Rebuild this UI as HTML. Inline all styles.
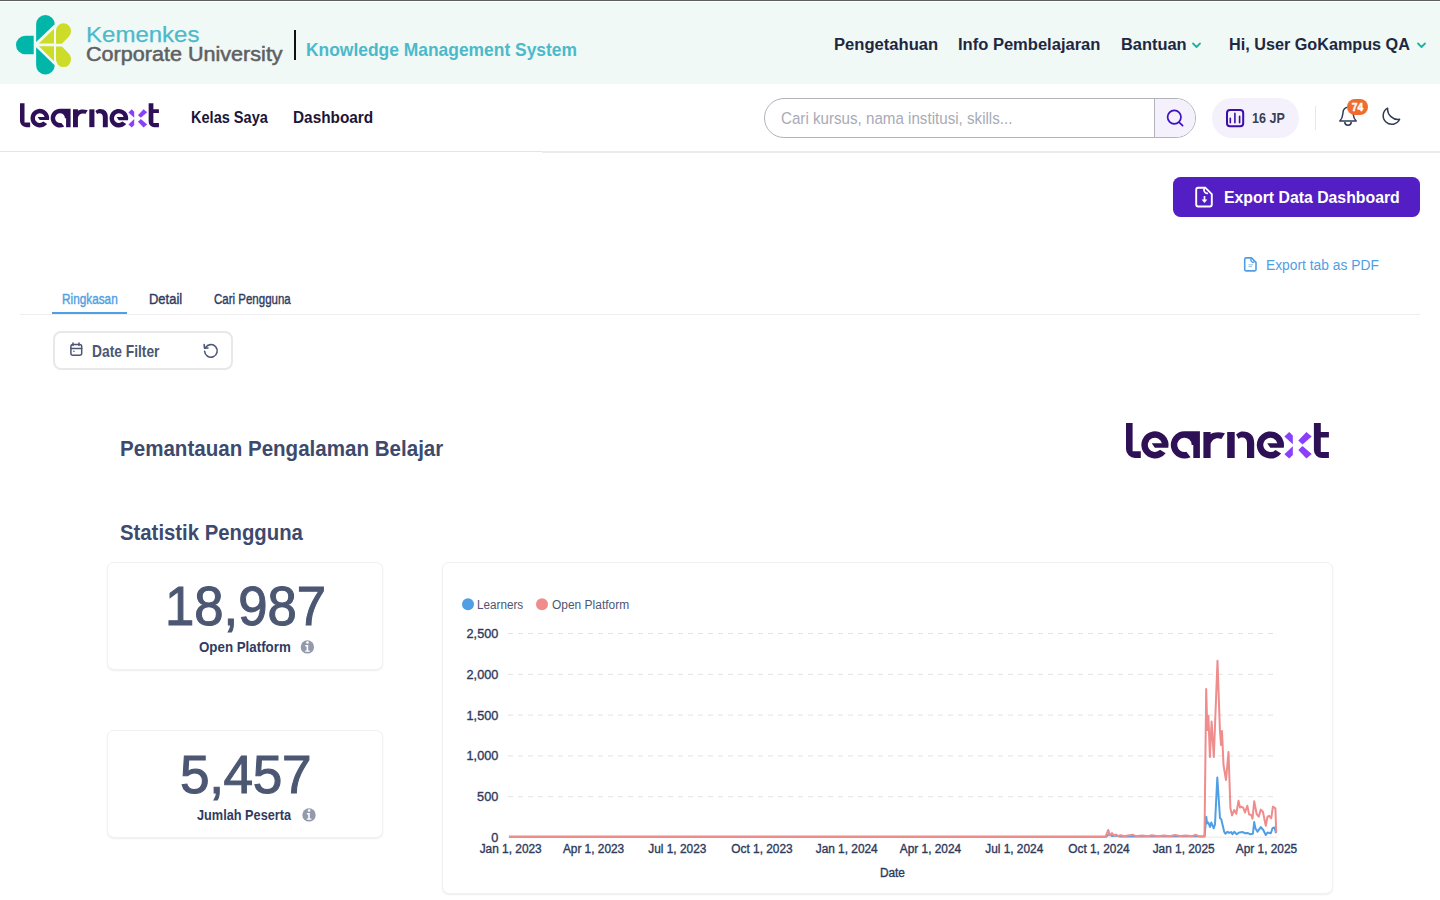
<!DOCTYPE html>
<html><head><meta charset="utf-8">
<style>
*{box-sizing:border-box;margin:0;padding:0}
html,body{width:1440px;height:900px;overflow:hidden;background:#fff;font-family:"Liberation Sans",sans-serif}
.a{position:absolute}
.t{position:absolute;white-space:nowrap;line-height:1;font-family:"Liberation Sans",sans-serif}
.card{position:absolute;background:#fff;border:1px solid #f1f1f3;border-radius:7px;box-shadow:0 1px 2px rgba(0,0,0,0.07)}
</style></head>
<body>
<div class="a" style="left:0;top:0;width:1440px;height:1px;background:#5d605e"></div>
<div class="a" style="left:0;top:2px;width:1440px;height:82px;background:#f0f9f6"></div>
<div class="a" style="left:0;top:151px;width:542px;height:1px;background:#e4e4e8"></div>
<div class="a" style="left:542px;top:151px;width:898px;height:2px;background:#ececef"></div>

<svg class="a" style="left:0;top:0" width="80" height="84">
<g fill="#00b6a8">
<path d="M33.7,35.7 H25.3 A9.3,9.3 0 0 0 25.3,54.3 H33.7 Z"/>
<path d="M36.1,41.9 V24.3 A9.3,9.3 0 0 1 54.7,24.3 Z"/>
<path d="M36.1,47.3 V65.2 A9.3,9.3 0 0 0 54.7,65.2 Z"/>
</g>
<g fill="#cddc28">
<path d="M56,43.8 V30.7 A7.5,7.5 0 0 1 71,30.7 C71,33.5 70,35.5 68,37.5 L61.9,43.8 Z"/>
<path d="M56,46.5 H61.9 L68,52.8 C70,54.8 71,56.8 71,59.6 A7.5,7.5 0 0 1 56,59.6 Z"/>
<path d="M38.9,43.4 L54,28.7 V43.4 Z"/>
<path d="M38.9,46.2 H54 V61.3 Z"/>
</g>
</svg>
<div class="a" style="left:294px;top:30px;width:2px;height:29.5px;background:#111"></div>

<svg class="a" style="left:1185px;top:36px" width="250" height="20">
<path d="M8,7.5 L11.5,11 L15,7.5" fill="none" stroke="#1fb39f" stroke-width="1.8" stroke-linecap="round" stroke-linejoin="round"/>
<path d="M233,7.5 L236.5,11 L240,7.5" fill="none" stroke="#1fb39f" stroke-width="1.8" stroke-linecap="round" stroke-linejoin="round"/>
</svg>

<svg class="a" style="left:20.2px;top:103.1px" width="139" height="25" viewBox="0 0 203 36">
<g fill="#2e1056">
<path d="M0,0 H6.6 V28.2 H14.8 V35 H9 A9,9 0 0 1 0,26 Z"/>
<path transform="translate(-115.45,-0.15)" d="M155.1,30.4 A13.6,13.6 0 1 1 157.7,24.8 H144.3 L141.2,20.3 H151.3 A7.1,7.1 0 1 0 149.5,26.9 Z"/>
<path d="M64.59,34.17 A13.7,13.7 0 1 1 58.5,8.2 H73.9 V35 H67.3 V21.9 H65.7 A7.2,7.2 0 1 0 60.36,28.85 Z"/>
<path d="M77.4,35 V9 H84.6 V11.2 C87.5,9.3 92,8.5 99,10.3 L95.4,15.9 C90,14 86,16.5 84.6,21 V35 Z"/>
<rect x="101.2" y="9" width="7.5" height="26"/>
<path d="M110.1,11.4 C113,9 115,8.5 117,8.5 C124,8.5 128.2,12.5 128.2,20 V35 H121 V20.5 C121,16.5 119,14.6 116,14.6 C114.5,14.6 113.5,15 112.6,15.9 Z"/>
<path d="M155.1,30.4 A13.6,13.6 0 1 1 157.7,24.8 H144.3 L141.2,20.3 H151.3 A7.1,7.1 0 1 0 149.5,26.9 Z"/>
<path d="M187.9,0 H194.8 V9 H202.9 V14.5 H194.8 V28.9 H202.9 V35 H196 A8.1,8.1 0 0 1 187.9,26.9 Z"/>
</g>
<g fill="#8a3ffc">
<path d="M158.4,13.6 L163.2,9 L166.8,12.5 V21.2 Z"/>
<path d="M158.4,31.2 L163.2,35.5 L166.8,32 V23.2 Z"/>
<path d="M172.3,17.6 L180.4,9 L185.7,13.4 L176.5,21.4 Z"/>
<path d="M172.3,27 L176.5,23 L185.7,31 L180.4,35.5 Z"/>
</g>
</svg>

<div class="a" style="left:764px;top:98px;width:432px;height:40px;border:1px solid #b3b3bd;border-radius:20px;background:#fff;overflow:hidden">
  <div class="a" style="left:389px;top:0;width:42px;height:38px;background:#f4f1fd;border-left:1px solid #b3b3bd"></div>
</div>
<svg class="a" style="left:1160px;top:104px" width="30" height="30">
<circle cx="14.3" cy="13.1" r="6.7" fill="none" stroke="#3f10c0" stroke-width="1.7"/>
<path d="M19.2,18.4 L22.6,21.6" stroke="#3f10c0" stroke-width="1.7" stroke-linecap="round"/>
</svg>
<div class="a" style="left:1212px;top:98px;width:87px;height:40px;border-radius:20px;background:#f4f1fd"></div>
<svg class="a" style="left:1220px;top:104px" width="30" height="30">
<rect x="7" y="5.9" width="16.2" height="16.3" rx="3" fill="none" stroke="#3a0ea8" stroke-width="2"/>
<path d="M10.3,14.3 V18.8 M14.9,9.4 V18.8 M19.6,12.2 V18.8" stroke="#3a0ea8" stroke-width="1.6" stroke-linecap="round"/>
</svg>
<div class="a" style="left:1315px;top:106px;width:1px;height:24px;background:#e6e7eb"></div>
<svg class="a" style="left:1330px;top:95px" width="80" height="40">
<path d="M9.8,26 Q12.5,23.5 12.8,19 L13,17.5 A5,5.3 0 0 1 23,17.5 L23.2,19 Q23.5,23.5 26.2,26 Z" fill="none" stroke="#2f3a55" stroke-width="1.5" stroke-linejoin="round"/>
<path d="M14.8,27 A3.2,3.2 0 0 0 21.2,27" fill="none" stroke="#2f3a55" stroke-width="1.5"/>
<path d="M69.6,24.3 A8.6,8.6 0 1 1 57.6,13.2 A10.5,10.5 0 0 0 69.6,24.3 Z" fill="none" stroke="#2f3a55" stroke-width="1.5" stroke-linejoin="round"/>
</svg>
<div class="a" style="left:1347.2px;top:98.8px;width:20.8px;height:16.3px;border-radius:9px;background:#ef6c2e"></div>

<div class="a" style="left:1172.5px;top:177px;width:247.5px;height:40px;border-radius:7.5px;background:#531ec4"></div>
<svg class="a" style="left:1190px;top:182px" width="30" height="30">
<path d="M8.2,5.8 H15.5 L21.8,12.1 V22.5 A2,2 0 0 1 19.8,24.5 H8.2 A2,2 0 0 1 6.2,22.5 V7.8 A2,2 0 0 1 8.2,5.8 Z" fill="none" stroke="#fff" stroke-width="1.9" stroke-linejoin="round"/>
<path d="M14.6,6 A3.4,3.4 0 0 0 18,11.3" fill="none" stroke="#fff" stroke-width="1.6"/>
<path d="M14.5,14 V19" stroke="#fff" stroke-width="1.7"/>
<path d="M11.6,17.6 H17.4 L14.5,21 Z" fill="#fff"/>
</svg>

<svg class="a" style="left:1240px;top:252px" width="24" height="24">
<path d="M6.2,5.9 H11.5 L16,10.4 V17.4 A1.5,1.5 0 0 1 14.5,18.9 H6.2 A1.5,1.5 0 0 1 4.7,17.4 V7.4 A1.5,1.5 0 0 1 6.2,5.9 Z" fill="none" stroke="#509ee3" stroke-width="1.6" stroke-linejoin="round"/>
<path d="M11.5,6.5 A2,2 0 0 0 14.5,9.5" fill="none" stroke="#509ee3" stroke-width="1.2"/>
<path d="M8.5,12.8 H13 M8.5,14.6 H12" stroke="#8ec0ee" stroke-width="1"/>
</svg>

<div class="a" style="left:20px;top:314px;width:1400px;height:1px;background:#eeeef0"></div>
<div class="a" style="left:52px;top:311.7px;width:75.2px;height:2.5px;background:#509ee3"></div>

<div class="a" style="left:52.8px;top:330.6px;width:180.6px;height:39.4px;border:2px solid #e8e8ea;border-radius:8px"></div>
<svg class="a" style="left:60px;top:335px" width="30" height="30">
<rect x="10.9" y="9.6" width="10.8" height="10.6" rx="2" fill="none" stroke="#4c5773" stroke-width="1.5"/>
<path d="M10.9,13.5 H21.7 M13,8 V10.5 M19,8 V10.5" stroke="#4c5773" stroke-width="1.5" stroke-linecap="round"/>
<path d="M13.3,16.3 H14.6" stroke="#4c5773" stroke-width="1.3"/>
</svg>
<svg class="a" style="left:195px;top:335.6px" width="30" height="30">
<path d="M9.6,15.3 A6.3,6.3 0 1 0 10.5,11.6" fill="none" stroke="#4c5773" stroke-width="1.6" stroke-linecap="round"/>
<path d="M9.2,8.5 L9.5,12.2 L13,12" fill="none" stroke="#4c5773" stroke-width="1.6" stroke-linecap="round" stroke-linejoin="round"/>
</svg>

<svg class="a" style="left:1126px;top:423px" width="203" height="36" viewBox="0 0 203 36">
<g fill="#2e1056">
<path d="M0,0 H6.6 V28.2 H14.8 V35 H9 A9,9 0 0 1 0,26 Z"/>
<path transform="translate(-115.45,-0.15)" d="M155.1,30.4 A13.6,13.6 0 1 1 157.7,24.8 H144.3 L141.2,20.3 H151.3 A7.1,7.1 0 1 0 149.5,26.9 Z"/>
<path d="M64.59,34.17 A13.7,13.7 0 1 1 58.5,8.2 H73.9 V35 H67.3 V21.9 H65.7 A7.2,7.2 0 1 0 60.36,28.85 Z"/>
<path d="M77.4,35 V9 H84.6 V11.2 C87.5,9.3 92,8.5 99,10.3 L95.4,15.9 C90,14 86,16.5 84.6,21 V35 Z"/>
<rect x="101.2" y="9" width="7.5" height="26"/>
<path d="M110.1,11.4 C113,9 115,8.5 117,8.5 C124,8.5 128.2,12.5 128.2,20 V35 H121 V20.5 C121,16.5 119,14.6 116,14.6 C114.5,14.6 113.5,15 112.6,15.9 Z"/>
<path d="M155.1,30.4 A13.6,13.6 0 1 1 157.7,24.8 H144.3 L141.2,20.3 H151.3 A7.1,7.1 0 1 0 149.5,26.9 Z"/>
<path d="M187.9,0 H194.8 V9 H202.9 V14.5 H194.8 V28.9 H202.9 V35 H196 A8.1,8.1 0 0 1 187.9,26.9 Z"/>
</g>
<g fill="#8a3ffc">
<path d="M158.4,13.6 L163.2,9 L166.8,12.5 V21.2 Z"/>
<path d="M158.4,31.2 L163.2,35.5 L166.8,32 V23.2 Z"/>
<path d="M172.3,17.6 L180.4,9 L185.7,13.4 L176.5,21.4 Z"/>
<path d="M172.3,27 L176.5,23 L185.7,31 L180.4,35.5 Z"/>
</g>
</svg>

<div class="card" style="left:107px;top:562px;width:276px;height:108px"></div>
<div class="card" style="left:107px;top:730px;width:276px;height:108px"></div>
<svg class="a" style="left:290px;top:630px" width="40" height="200">
<g>
<circle cx="17.4" cy="16.9" r="6.7" fill="#949aab"/>
<circle cx="17.5" cy="12.5" r="1.3" fill="#fff"/>
<path d="M15.3,15.1 H18.2 V20.5 H19.8 V21.8 H15.2 V20.5 H16.6 V16.4 H15.3 Z" fill="#fff"/>
</g>
<g transform="translate(1.6,168)">
<circle cx="17.4" cy="16.9" r="6.7" fill="#949aab"/>
<circle cx="17.5" cy="12.5" r="1.3" fill="#fff"/>
<path d="M15.3,15.1 H18.2 V20.5 H19.8 V21.8 H15.2 V20.5 H16.6 V16.4 H15.3 Z" fill="#fff"/>
</g>
</svg>

<div class="card" style="left:442px;top:562px;width:891px;height:332px"></div>
<svg class="a" style="left:0;top:0" width="1440" height="900">
<circle cx="468" cy="604.3" r="6" fill="#509ee3"/>
<circle cx="542" cy="604.3" r="6" fill="#ef8c8c"/>
<line x1="508" y1="633.5" x2="1276" y2="633.5" stroke="#e3e3e3" stroke-width="1" stroke-dasharray="5 5"/><line x1="508" y1="674.3" x2="1276" y2="674.3" stroke="#e3e3e3" stroke-width="1" stroke-dasharray="5 5"/><line x1="508" y1="715.1" x2="1276" y2="715.1" stroke="#e3e3e3" stroke-width="1" stroke-dasharray="5 5"/><line x1="508" y1="755.9" x2="1276" y2="755.9" stroke="#e3e3e3" stroke-width="1" stroke-dasharray="5 5"/><line x1="508" y1="796.7" x2="1276" y2="796.7" stroke="#e3e3e3" stroke-width="1" stroke-dasharray="5 5"/>
<line x1="508" y1="837.2" x2="1277" y2="837.2" stroke="#e8e8e8" stroke-width="1"/>
<polyline points="509,836.7 1106,836.7 1108,835 1109.5,834 1112,836 1116,835.6 1120,836.5 1204.6,836.2 1206.25,816.7 1207.1,823.3 1208.3,822.5 1210,827 1211.25,822.5 1212.5,825.4 1213.75,828.3 1215,824.2 1217.3,777.5 1220,818.3 1221.25,819.2 1224.2,831.7 1225.4,833.75 1227.5,831.7 1229.2,832.9 1231.25,832.1 1232.5,834.2 1234.2,831.7 1236.7,834.2 1239.2,832.5 1242.9,832.1 1245,833.3 1247.5,832.9 1250,834.2 1252.9,833.75 1254.2,822.1 1255.4,828.3 1257.5,831.7 1260.8,827.1 1263.3,830 1265.8,835 1267.5,832.5 1270.8,833.3 1272.5,828.3 1274.6,827.5 1276,833.3" fill="none" stroke="#509ee3" stroke-width="2" stroke-linejoin="round"/>
<polyline points="509,836.7 1105.5,836.7 1107,833 1108.3,830 1110,835.5 1112,833 1114,835.5 1116,834.5 1118,836 1121,835.2 1124,836.3 1128,835.4 1133,834.8 1136,836.2 1142,835.6 1148,836.3 1152,835.2 1158,836.2 1164,835.5 1170,836.2 1175,835 1180,836.1 1186,835.4 1192,836.2 1196,834.8 1199,836.4 1204.5,836.4 1206.2,689 1207.3,730 1208.4,716 1209.9,757 1211.6,721.5 1213.8,757 1217.5,660.8 1219.9,730 1221,745 1222,731 1223.5,765 1226,780 1228.5,752 1230.4,808.3 1232.1,815.4 1234.2,810 1236.25,813.75 1238.5,800.8 1240,807.5 1241.7,806.7 1243.3,807.9 1245,812.5 1247.3,805.8 1249.2,814.6 1251.25,815 1252.5,818.75 1254.2,801.25 1256.7,814.2 1258.75,816.7 1260.8,809.6 1262.9,811.7 1265.8,825.8 1267.5,816.7 1269.2,815.8 1271.25,818.3 1272.9,806.7 1275.4,808.3 1276.25,832.5" fill="none" stroke="#ef8c8c" stroke-width="2" stroke-linejoin="round"/>
</svg>

<div class="t" style="left:86.43px;top:24px;font-size:22.43px;font-weight:400;color:#4cb9cb;transform:scaleX(1.0711);transform-origin:0 0;-webkit-text-stroke:0.25px #4cb9cb">Kemenkes</div>
<div class="t" style="left:86.40px;top:45px;font-size:19.57px;font-weight:400;color:#5f6062;transform:scaleX(1.1030);transform-origin:0 0;-webkit-text-stroke:0.5px #5f6062">Corporate University</div>
<div class="t" style="left:305.78px;top:40px;font-size:19.00px;font-weight:700;color:#4cb9cb;transform:scaleX(0.9168);transform-origin:0 0">Knowledge Management System</div>
<div class="t" style="left:834.03px;top:36px;font-size:17.14px;font-weight:700;color:#1f2741;transform:scaleX(0.9683);transform-origin:0 0">Pengetahuan</div>
<div class="t" style="left:958.03px;top:36px;font-size:17.14px;font-weight:700;color:#1f2741;transform:scaleX(0.9654);transform-origin:0 0">Info Pembelajaran</div>
<div class="t" style="left:1120.95px;top:36px;font-size:17.29px;font-weight:700;color:#1f2741;transform:scaleX(0.9494);transform-origin:0 0">Bantuan</div>
<div class="t" style="left:1229.36px;top:36px;font-size:17.29px;font-weight:700;color:#1f2741;transform:scaleX(0.9373);transform-origin:0 0">Hi, User GoKampus QA</div>
<div class="t" style="left:191.29px;top:110px;font-size:16.00px;font-weight:700;color:#1d1538;transform:scaleX(0.9090);transform-origin:0 0">Kelas Saya</div>
<div class="t" style="left:292.94px;top:110px;font-size:16.00px;font-weight:700;color:#1d1538;transform:scaleX(0.9597);transform-origin:0 0">Dashboard</div>
<div class="t" style="left:781.30px;top:110px;font-size:17.31px;font-weight:400;color:#a9aab6;transform:scaleX(0.8755);transform-origin:0 0">Cari kursus, nama institusi, skills...</div>
<div class="t" style="left:1251.80px;top:112px;font-size:13.86px;font-weight:700;color:#3a3f55;transform:scaleX(0.9042);transform-origin:0 0">16 JP</div>
<div class="t" style="left:1351.70px;top:103px;font-size:10.12px;font-weight:700;color:#fff;letter-spacing:0.178px;-webkit-text-stroke:0.45px #fff">74</div>
<div class="t" style="left:1224.06px;top:190px;font-size:16.86px;font-weight:700;color:#fff;transform:scaleX(0.9381);transform-origin:0 0">Export Data Dashboard</div>
<div class="t" style="left:1266.10px;top:257px;font-size:15.29px;font-weight:400;color:#509ee3;transform:scaleX(0.9036);transform-origin:0 0">Export tab as PDF</div>
<div class="t" style="left:61.70px;top:292px;font-size:14.66px;font-weight:400;color:#509ee3;transform:scaleX(0.8040);transform-origin:0 0;-webkit-text-stroke:0.4px #509ee3">Ringkasan</div>
<div class="t" style="left:149.12px;top:292px;font-size:14.66px;font-weight:400;color:#2f3b62;transform:scaleX(0.8845);transform-origin:0 0;-webkit-text-stroke:0.4px #2f3b62">Detail</div>
<div class="t" style="left:214.40px;top:292px;font-size:14.66px;font-weight:400;color:#2f3b62;transform:scaleX(0.7845);transform-origin:0 0;-webkit-text-stroke:0.4px #2f3b62">Cari Pengguna</div>
<div class="t" style="left:91.63px;top:344px;font-size:15.86px;font-weight:700;color:#4c5773;transform:scaleX(0.8701);transform-origin:0 0">Date Filter</div>
<div class="t" style="left:119.85px;top:437px;font-size:22.86px;font-weight:700;color:#3d4a6e;transform:scaleX(0.8991);transform-origin:0 0">Pemantauan Pengalaman Belajar</div>
<div class="t" style="left:120.00px;top:521px;font-size:22.86px;font-weight:700;color:#3d4a6e;transform:scaleX(0.8887);transform-origin:0 0">Statistik Pengguna</div>
<div class="t" style="left:165.36px;top:579px;font-size:54.79px;font-weight:400;color:#4c5773;transform:scaleX(0.9612);transform-origin:0 0;-webkit-text-stroke:1.1px #4c5773">18,987</div>
<div class="t" style="left:199.00px;top:640px;font-size:14.29px;font-weight:700;color:#2f3b62;transform:scaleX(0.9324);transform-origin:0 0">Open Platform</div>
<div class="t" style="left:180.00px;top:748px;font-size:53.14px;font-weight:400;color:#4c5773;letter-spacing:-0.374px;-webkit-text-stroke:1.1px #4c5773">5,457</div>
<div class="t" style="left:197.10px;top:808px;font-size:14.29px;font-weight:700;color:#2f3b62;transform:scaleX(0.8909);transform-origin:0 0">Jumlah Peserta</div>
<div class="t" style="left:477.31px;top:599px;font-size:12.50px;font-weight:400;color:#4c5773;transform:scaleX(0.9358);transform-origin:0 0">Learners</div>
<div class="t" style="left:552.00px;top:599px;font-size:12.50px;font-weight:400;color:#4c5773;transform:scaleX(0.9572);transform-origin:0 0">Open Platform</div>
<div class="t" style="left:466.57px;top:628px;font-size:12.68px;font-weight:400;color:#2e3a5c;-webkit-text-stroke:0.35px #2e3a5c">2,500</div>
<div class="t" style="left:466.57px;top:669px;font-size:12.68px;font-weight:400;color:#2e3a5c;-webkit-text-stroke:0.35px #2e3a5c">2,000</div>
<div class="t" style="left:466.57px;top:710px;font-size:12.68px;font-weight:400;color:#2e3a5c;-webkit-text-stroke:0.35px #2e3a5c">1,500</div>
<div class="t" style="left:466.57px;top:750px;font-size:12.68px;font-weight:400;color:#2e3a5c;-webkit-text-stroke:0.35px #2e3a5c">1,000</div>
<div class="t" style="left:477.12px;top:791px;font-size:12.68px;font-weight:400;color:#2e3a5c;-webkit-text-stroke:0.35px #2e3a5c">500</div>
<div class="t" style="left:491.20px;top:832px;font-size:12.68px;font-weight:400;color:#2e3a5c;-webkit-text-stroke:0.35px #2e3a5c">0</div>
<div class="t" style="left:479.69px;top:844px;font-size:11.86px;font-weight:400;color:#2e3a5c;-webkit-text-stroke:0.35px #2e3a5c">Jan 1, 2023</div>
<div class="t" style="left:562.88px;top:844px;font-size:11.86px;font-weight:400;color:#2e3a5c;-webkit-text-stroke:0.35px #2e3a5c">Apr 1, 2023</div>
<div class="t" style="left:648.30px;top:844px;font-size:11.86px;font-weight:400;color:#2e3a5c;-webkit-text-stroke:0.35px #2e3a5c">Jul 1, 2023</div>
<div class="t" style="left:731.35px;top:844px;font-size:11.86px;font-weight:400;color:#2e3a5c;-webkit-text-stroke:0.35px #2e3a5c">Oct 1, 2023</div>
<div class="t" style="left:815.71px;top:844px;font-size:11.86px;font-weight:400;color:#2e3a5c;-webkit-text-stroke:0.35px #2e3a5c">Jan 1, 2024</div>
<div class="t" style="left:899.82px;top:844px;font-size:11.86px;font-weight:400;color:#2e3a5c;-webkit-text-stroke:0.35px #2e3a5c">Apr 1, 2024</div>
<div class="t" style="left:985.24px;top:844px;font-size:11.86px;font-weight:400;color:#2e3a5c;-webkit-text-stroke:0.35px #2e3a5c">Jul 1, 2024</div>
<div class="t" style="left:1068.29px;top:844px;font-size:11.86px;font-weight:400;color:#2e3a5c;-webkit-text-stroke:0.35px #2e3a5c">Oct 1, 2024</div>
<div class="t" style="left:1152.65px;top:844px;font-size:11.86px;font-weight:400;color:#2e3a5c;-webkit-text-stroke:0.35px #2e3a5c">Jan 1, 2025</div>
<div class="t" style="left:1235.84px;top:844px;font-size:11.86px;font-weight:400;color:#2e3a5c;-webkit-text-stroke:0.35px #2e3a5c">Apr 1, 2025</div>
<div class="t" style="left:880.00px;top:868px;font-size:11.86px;font-weight:400;color:#2e3a5c;letter-spacing:-0.044px;-webkit-text-stroke:0.35px #2e3a5c">Date</div>
</body></html>
